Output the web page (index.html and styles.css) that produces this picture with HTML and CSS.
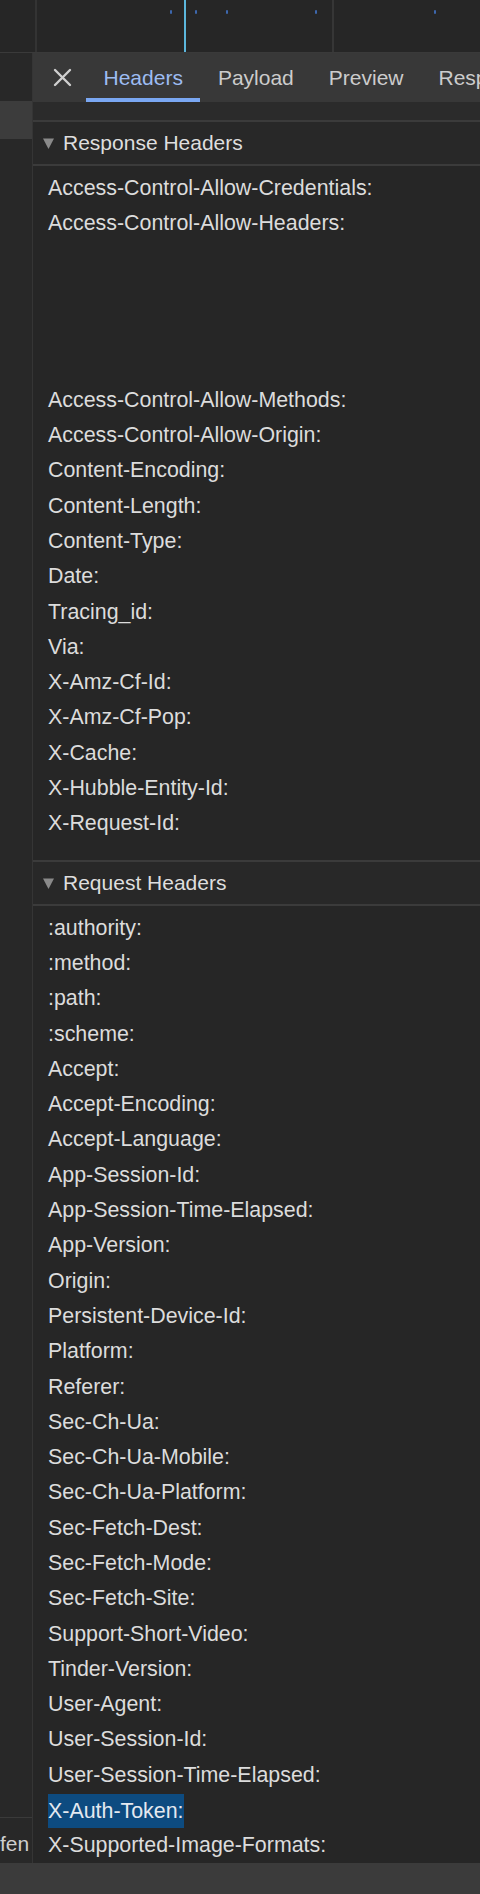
FILE: index.html
```html
<!DOCTYPE html>
<html lang="en">
<head>
<meta charset="utf-8">
<title>Network - Headers</title>
<link rel="stylesheet" href="styles.css">
</head>
<body>
<div class="page">
  <div class="overview">
    <div class="ov-left"></div>
    <div class="ov-grid">
      <div class="ov-cell"></div>
      <div class="ov-cell last"></div>
      <span class="ov-cursor" style="left:147px"></span>
      <span class="ov-dot" style="left:133px"></span>
      <span class="ov-dot" style="left:158px"></span>
      <span class="ov-dot" style="left:189px"></span>
      <span class="ov-dot" style="left:278px"></span>
      <span class="ov-dot" style="left:397px"></span>
    </div>
  </div>

  <div class="main">
    <aside class="side">
      <div class="side-top"></div>
      <div class="side-sel"></div>
      <div class="side-fill"></div>
      <div class="side-row">fen</div>
    </aside>

    <section class="panel">
      <nav class="tabs">
        <span class="close">
          <svg width="19" height="19" viewBox="0 0 19 19"><path d="M2 2 L17 17 M17 2 L2 17" stroke="#cfcfcf" stroke-width="2.4" stroke-linecap="round"/></svg>
        </span>
        <span class="tab active">Headers</span>
        <span class="tab">Payload</span>
        <span class="tab">Preview</span>
        <span class="tab">Response</span>
      </nav>
      <div class="strip"></div>

      <div class="sec-head">
        <svg class="tri" width="11" height="11" viewBox="0 0 11 11"><polygon points="0,0.5 11,0.5 5.5,11" fill="#8a8a8a"/></svg>
        <span>Response Headers</span>
      </div>
      <ul class="rows resp">
        <li>Access-Control-Allow-Credentials:</li>
        <li class="tall">Access-Control-Allow-Headers:</li>
        <li>Access-Control-Allow-Methods:</li>
        <li>Access-Control-Allow-Origin:</li>
        <li>Content-Encoding:</li>
        <li>Content-Length:</li>
        <li>Content-Type:</li>
        <li>Date:</li>
        <li>Tracing_id:</li>
        <li>Via:</li>
        <li>X-Amz-Cf-Id:</li>
        <li>X-Amz-Cf-Pop:</li>
        <li>X-Cache:</li>
        <li>X-Hubble-Entity-Id:</li>
        <li>X-Request-Id:</li>
      </ul>

      <div class="sec-head">
        <svg class="tri" width="11" height="11" viewBox="0 0 11 11"><polygon points="0,0.5 11,0.5 5.5,11" fill="#8a8a8a"/></svg>
        <span>Request Headers</span>
      </div>
      <ul class="rows req">
        <li>:authority:</li>
        <li>:method:</li>
        <li>:path:</li>
        <li>:scheme:</li>
        <li>Accept:</li>
        <li>Accept-Encoding:</li>
        <li>Accept-Language:</li>
        <li>App-Session-Id:</li>
        <li>App-Session-Time-Elapsed:</li>
        <li>App-Version:</li>
        <li>Origin:</li>
        <li>Persistent-Device-Id:</li>
        <li>Platform:</li>
        <li>Referer:</li>
        <li>Sec-Ch-Ua:</li>
        <li>Sec-Ch-Ua-Mobile:</li>
        <li>Sec-Ch-Ua-Platform:</li>
        <li>Sec-Fetch-Dest:</li>
        <li>Sec-Fetch-Mode:</li>
        <li>Sec-Fetch-Site:</li>
        <li>Support-Short-Video:</li>
        <li>Tinder-Version:</li>
        <li>User-Agent:</li>
        <li>User-Session-Id:</li>
        <li>User-Session-Time-Elapsed:</li>
        <li><span class="hl">X-Auth-Token:</span></li>
        <li>X-Supported-Image-Formats:</li>
      </ul>
    </section>
  </div>

  <div class="bottom"></div>
</div>
</body>
</html>
```

FILE: styles.css
```css
* { box-sizing: border-box; }

html, body {
  margin: 0;
  padding: 0;
  background: #262626;
}

body {
  width: 480px;
  height: 1894px;
  overflow: hidden;
  font-family: "Liberation Sans", Arial, Helvetica, sans-serif;
  color: #dcdcdc;
}

.page {
  display: flex;
  flex-direction: column;
  height: 1894px;
}

/* timeline overview */
.overview {
  display: flex;
  height: 53px;
  flex: none;
  background: #262626;
  border-bottom: 1px solid #3a3a3a;
}

.ov-left {
  width: 37px;
  border-right: 2px solid #333333;
}

.ov-grid {
  position: relative;
  flex: 1;
  display: grid;
  grid-template-columns: 297px 1fr;
}

.ov-cell {
  border-right: 2px solid #363636;
}

.ov-cell.last {
  border-right: 0;
}

.ov-cursor {
  position: absolute;
  top: 0;
  bottom: 0;
  width: 2px;
  background: #5bb6dc;
}

.ov-dot {
  position: absolute;
  top: 10px;
  width: 2px;
  height: 4px;
  border-radius: 1px;
  background: #3d67ad;
}

/* main area */
.main {
  flex: 1;
  display: flex;
  min-height: 0;
}

.side {
  width: 33px;
  flex: none;
  display: flex;
  flex-direction: column;
  background: #282828;
  border-right: 1px solid #353535;
}

.side-top {
  height: 48px;
}

.side-sel {
  height: 38px;
  background: #3c3c3c;
}

.side-fill {
  flex: 1;
}

.side-row {
  height: 46px;
  border-top: 1px solid #3a3a3a;
  padding: 5px 4px 0 0;
  text-align: right;
  white-space: nowrap;
  overflow: hidden;
  font-size: 21px;
  line-height: 42px;
  color: #cfcfcf;
}

.panel {
  flex: 1;
  min-width: 0;
  display: flex;
  flex-direction: column;
  background: #262626;
}

/* tabs */
.tabs {
  height: 49px;
  flex: none;
  display: flex;
  align-items: stretch;
  background: #383838;
  white-space: nowrap;
  overflow: hidden;
}

.close {
  display: flex;
  align-items: center;
  width: 19px;
  margin: 0 14px 0 20px;
  flex: none;
}

.tab {
  position: relative;
  padding: 0 17.5px;
  font-size: 21px;
  line-height: 49px;
  color: #cccccc;
  flex: none;
}

.tab.active {
  color: #9dbcf2;
}

.tab.active::after {
  content: "";
  position: absolute;
  left: 0;
  right: 0;
  bottom: 0;
  height: 4px;
  background: #7aa7f2;
}

.strip {
  height: 20px;
  flex: none;
  background: #2b2b2b;
  border-bottom: 2px solid #3b3b3b;
}

/* section headers */
.sec-head {
  height: 46px;
  flex: none;
  display: flex;
  align-items: center;
  gap: 9px;
  padding-left: 10px;
  background: #282828;
  border-bottom: 2px solid #3b3b3b;
  font-size: 21px;
  line-height: 42px;
  color: #dedede;
}

.sec-head span {
  padding-bottom: 0;
}

.rows + .sec-head {
  border-top: 2px solid #3b3b3b;
}

.sec-head .tri {
  flex: none;
  margin-top: 1px;
}

.sec-head {
  height: 44px;
}

.rows + .sec-head {
  height: 46px;
}

/* rows */
.rows {
  list-style: none;
  margin: 0;
  padding: 5px 0 0 15px;
  font-size: 21.4px;
  line-height: 35.3px;
  color: #dcdcdc;
  white-space: nowrap;
}

.rows.resp {
  padding-bottom: 18px;
}

.rows li.tall {
  height: 176.5px;
}

.hl {
  display: inline-block;
  background: #0d4b80;
  line-height: 34px;
  vertical-align: top;
  margin-top: 0.5px;
  color: #e4e9f0;
}

.bottom {
  height: 31px;
  flex: none;
  background: #3b3b3b;
}
```
